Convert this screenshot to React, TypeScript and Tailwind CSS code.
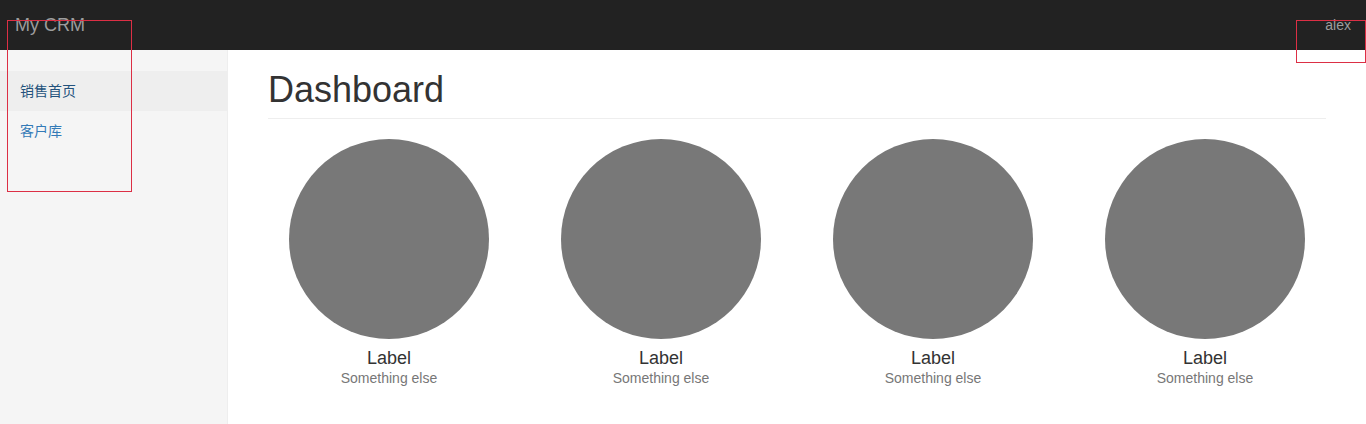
import React from 'react';

const font = '"Liberation Sans", "Noto Sans CJK SC", Arial, sans-serif';

const cards = [1, 2, 3, 4];

export default function App() {
  return (
    <div className="relative w-[1366px] h-[424px] overflow-hidden bg-white text-[14px] text-[#333]" style={{ fontFamily: font }}>
      {/* top navbar */}
      <nav className="h-[50px] bg-[#222] flex items-start justify-between">
        <a className="px-[15px] py-[15px] text-[18px] leading-[20px] text-[#9d9d9d]">My CRM</a>
        <a className="px-[15px] py-[15px] text-[14px] leading-[20px] text-[#9d9d9d]">alex</a>
      </nav>

      <div className="flex h-[374px]">
        {/* sidebar */}
        <aside className="w-[228px] shrink-0 bg-[#f5f5f5] border-r border-[#eee] pt-[21px]">
          <ul>
            <li className="h-[40px] bg-[#eee] px-[20px] flex items-center text-[#23527c]">销售首页</li>
            <li className="h-[40px] px-[20px] flex items-center text-[#337ab7]">客户库</li>
          </ul>
        </aside>

        {/* main */}
        <main className="flex-1 px-[40px]">
          <h1 className="mt-[20px] pb-[8px] text-[36px] leading-[40px] font-normal text-[#333] border-b border-[#eee]">
            Dashboard
          </h1>
          <div className="mt-[20px] grid grid-cols-4 mx-[-15px]">
            {cards.map((c) => (
              <div key={c} className="flex flex-col items-center">
                <div className="w-[200px] h-[200px] rounded-full bg-[#787878]" />
                <h4 className="mt-[9px] text-[18px] leading-[20px] text-[#333]">Label</h4>
                <span className="text-[14px] leading-[20px] text-[#777]">Something else</span>
              </div>
            ))}
          </div>
        </main>
      </div>

      {/* red highlight outlines from the screenshot */}
      <div className="absolute left-[7px] top-[20px] w-[125px] h-[172px] border border-[#dc2f45]" />
      <div className="absolute left-[1296px] top-[20px] w-[70px] h-[43px] border border-[#dc2f45]" />
    </div>
  );
}
